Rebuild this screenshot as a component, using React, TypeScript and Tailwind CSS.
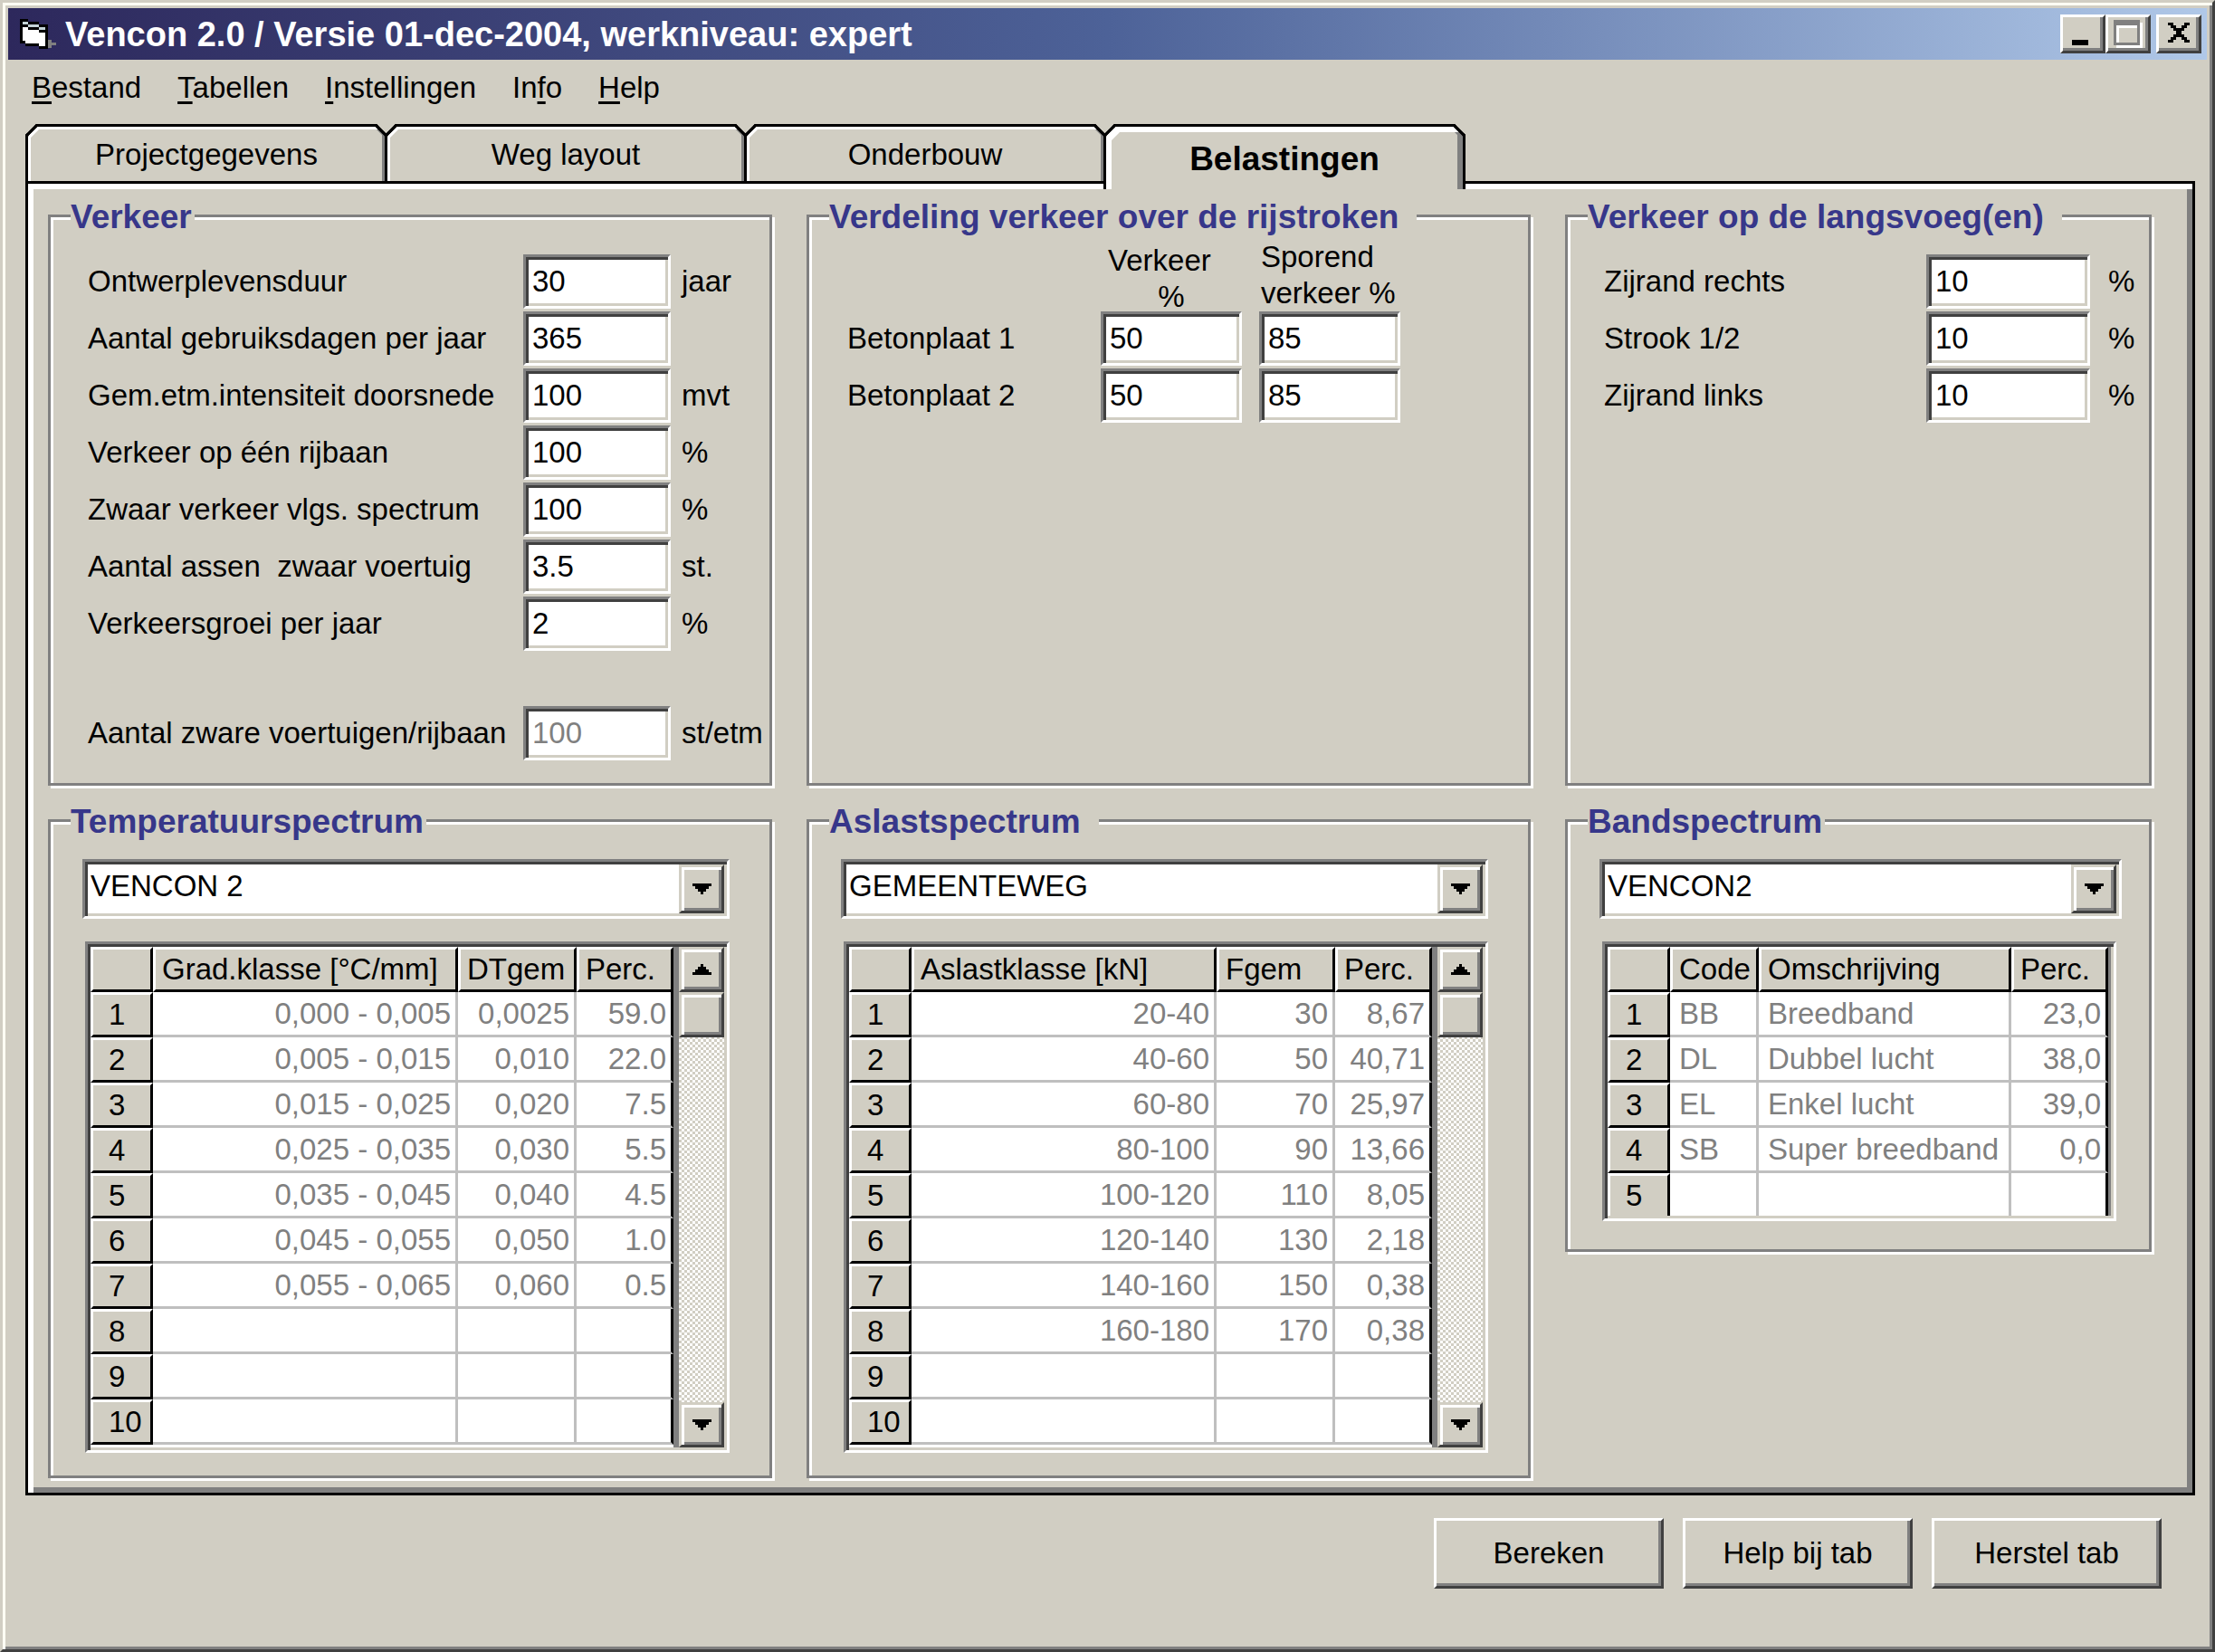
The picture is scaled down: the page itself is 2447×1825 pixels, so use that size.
import { useState } from 'react';
import type { ReactNode } from 'react';
import clsx from 'clsx';

const RAISED =
  'bg-[#d1cec3] border-3 border-t-white border-l-white border-r-[#404040] border-b-[#404040] shadow-[inset_-3px_-3px_0_#808080]';
const SUNKEN =
  'bg-white border-3 border-t-[#808080] border-l-[#808080] border-r-white border-b-white shadow-[inset_3px_3px_0_#404040,inset_-3px_-3px_0_#d1cec3]';
const SCROLL_BUTTON =
  'flex items-center justify-center h-[50px] shrink-0 bg-[#d1cec3] border-3 border-t-[#d1cec3] border-l-[#d1cec3] border-r-[#404040] border-b-[#404040] shadow-[inset_3px_3px_0_#fff,inset_-3px_-3px_0_#808080]';
const HEAD_CELL =
  'bg-[#d1cec3] border-3 border-t-white border-l-white border-r-black border-b-black font-normal text-left';

const MENU = [
  ['', 'B', 'estand'],
  ['', 'T', 'abellen'],
  ['', 'I', 'nstellingen'],
  ['In', 'f', 'o'],
  ['', 'H', 'elp']
];

const TABS = ['Projectgegevens', 'Weg layout', 'Onderbouw', 'Belastingen'];

const TRAFFIC = [
  { id: 'levensduur', label: 'Ontwerplevensduur', value: '30', unit: 'jaar' },
  { id: 'dagen', label: 'Aantal gebruiksdagen per jaar', value: '365', unit: '' },
  { id: 'intensiteit', label: 'Gem.etm.intensiteit doorsnede', value: '100', unit: 'mvt' },
  { id: 'rijbaan', label: 'Verkeer op één rijbaan', value: '100', unit: '%' },
  { id: 'zwaar', label: 'Zwaar verkeer vlgs. spectrum', value: '100', unit: '%' },
  { id: 'assen', label: 'Aantal assen  zwaar voertuig', value: '3.5', unit: 'st.' },
  { id: 'groei', label: 'Verkeersgroei per jaar', value: '2', unit: '%' }
];

const SLABS = [
  { label: 'Betonplaat 1', traffic: '50', tracking: '85' },
  { label: 'Betonplaat 2', traffic: '50', tracking: '85' }
];

const JOINTS = [
  { id: 'rechts', label: 'Zijrand rechts', value: '10' },
  { id: 'strook', label: 'Strook 1/2', value: '10' },
  { id: 'links', label: 'Zijrand links', value: '10' }
];

type Column = { title: string; width?: string; align: 'left' | 'right' };

const TEMPERATURE_COLUMNS: Column[] = [
  { title: 'Grad.klasse [°C/mm]', align: 'right' },
  { title: 'DTgem', width: 'w-[131px]', align: 'right' },
  { title: 'Perc.', width: 'w-[107px]', align: 'right' }
];
const TEMPERATURE_ROWS = [
  ['0,000 - 0,005', '0,0025', '59.0'],
  ['0,005 - 0,015', '0,010', '22.0'],
  ['0,015 - 0,025', '0,020', '7.5'],
  ['0,025 - 0,035', '0,030', '5.5'],
  ['0,035 - 0,045', '0,040', '4.5'],
  ['0,045 - 0,055', '0,050', '1.0'],
  ['0,055 - 0,065', '0,060', '0.5'],
  ['', '', ''],
  ['', '', ''],
  ['', '', '']
];

const AXLE_COLUMNS: Column[] = [
  { title: 'Aslastklasse [kN]', align: 'right' },
  { title: 'Fgem', width: 'w-[131px]', align: 'right' },
  { title: 'Perc.', width: 'w-[107px]', align: 'right' }
];
const AXLE_ROWS = [
  ['20-40', '30', '8,67'],
  ['40-60', '50', '40,71'],
  ['60-80', '70', '25,97'],
  ['80-100', '90', '13,66'],
  ['100-120', '110', '8,05'],
  ['120-140', '130', '2,18'],
  ['140-160', '150', '0,38'],
  ['160-180', '170', '0,38'],
  ['', '', ''],
  ['', '', '']
];

const TYRE_COLUMNS: Column[] = [
  { title: 'Code', width: 'w-[98px]', align: 'left' },
  { title: 'Omschrijving', align: 'left' },
  { title: 'Perc.', width: 'w-[107px]', align: 'right' }
];
const TYRE_ROWS = [
  ['BB', 'Breedband', '23,0'],
  ['DL', 'Dubbel lucht', '38,0'],
  ['EL', 'Enkel lucht', '39,0'],
  ['SB', 'Super breedband', '0,0'],
  ['', '', '']
];

function AppIcon() {
  return (
    <svg viewBox="0 0 40 34" className="w-10 h-[34px]" shapeRendering="crispEdges" aria-hidden="true">
      <path d="M0 0h9v3h12v3h10v27H21v-3H6v-3H0z" fill="#000" />
      <path d="M3 9h6v3h12v3h7v15h-7v-3H6v-3H3z" fill="#fff" />
      <path d="M3 3h6v3H3zM9 6h12v3H9zM21 9h7v3h-7z" fill="#c3d3d6" />
      <path d="M31 23h4v3h5v3h-5v3h-4z" fill="#808080" />
    </svg>
  );
}

function Arrow({ up = false }: { up?: boolean }) {
  return (
    <svg viewBox="0 0 7 4" className="w-[21px] h-3" shapeRendering="crispEdges" aria-hidden="true">
      <path d={up ? 'M3 0h1v1h1v1h1v1h1v1H0V3h1V2h1V1h1z' : 'M0 0h7v1H6v1H5v1H4v1H3V3H2V2H1V1H0z'} />
    </svg>
  );
}

function TitleBar() {
  return (
    <header className="flex items-center h-[57px] pl-[13px] pr-[6px] bg-linear-to-r from-[#2d285c] via-[#4d6298] to-[#b0c8e8]">
      <AppIcon />
      <h1 className="flex-1 pl-[10px] text-[38px] leading-10 font-bold text-white whitespace-nowrap">
        Vencon 2.0 / Versie 01-dec-2004, werkniveau: expert
      </h1>
      <button type="button" aria-label="Minimaliseren" className={clsx(RAISED, 'w-[50px] h-[43px]')}>
        <svg viewBox="0 0 44 37" shapeRendering="crispEdges" aria-hidden="true">
          <path d="M10 25h18v6H10z" />
        </svg>
      </button>
      <button type="button" aria-label="Maximaliseren" disabled className={clsx(RAISED, 'w-[50px] h-[43px]')}>
        <svg viewBox="0 0 44 37" shapeRendering="crispEdges" aria-hidden="true">
          <path d="M9 6h29v28H9z" fill="#fff" />
          <path d="M6 3h29v28H6z" fill="#808080" />
          <path d="M9 9h23v19H9z" fill="#fff" />
          <path d="M12 12h20v16H12z" fill="#d1cec3" />
        </svg>
      </button>
      <button type="button" aria-label="Sluiten" className={clsx(RAISED, 'w-[50px] h-[43px] ml-[6px]')}>
        <svg viewBox="0 0 44 37" shapeRendering="crispEdges" aria-hidden="true">
          <path d="M10 6h6v3h3v3h6V9h3V6h6v3h-3v3h-3v3h-3v4h3v3h3v3h3v3h-6v-3h-3v-3h-6v3h-3v3h-6v-3h3v-3h3v-3h3v-4h-3v-3h-3V9h-3z" />
        </svg>
      </button>
    </header>
  );
}

function Group({ title, wide, className, children }: {
  title: string;
  wide?: boolean;
  className?: string;
  children: ReactNode;
}) {
  return (
    <section
      aria-label={title}
      className={clsx('border-3 border-[#808080] shadow-[inset_3px_3px_0_#fff,3px_3px_0_#fff]', className)}
    >
      <h2
        className={clsx(
          'w-fit -mt-5 mb-[21px] ml-[22px] bg-[#d1cec3] text-[37px] leading-10 font-bold text-[#37378a] whitespace-nowrap',
          wide ? 'pr-5' : 'pr-[3px]'
        )}
      >
        {title}
      </h2>
      {children}
    </section>
  );
}

function Field({ id, label, value, disabled, className }: {
  id: string;
  label?: string;
  value: string;
  disabled?: boolean;
  className: string;
}) {
  const [text, setText] = useState(value);
  return (
    <input
      id={id}
      type="text"
      aria-label={label}
      value={text}
      disabled={disabled}
      onChange={(e) => setText(e.target.value)}
      className={clsx(SUNKEN, 'h-[60px] px-[7px] outline-none disabled:text-[#808080]', className)}
    />
  );
}

function TrafficRow({ id, label, value, unit, disabled }: {
  id: string;
  label: string;
  value: string;
  unit: string;
  disabled?: boolean;
}) {
  return (
    <div className="flex items-center">
      <label htmlFor={id} className="flex-1 whitespace-pre">{label}</label>
      <Field id={id} value={value} disabled={disabled} className="w-[163px]" />
      <span className="w-[109px] pl-3">{unit}</span>
    </div>
  );
}

function Combo({ label, options }: { label: string; options: string[] }) {
  return (
    <div className="relative">
      <select aria-label={label} className={clsx(SUNKEN, 'block w-full h-[66px] pl-[6px] pr-14 pb-[6px] appearance-none outline-none')}>
        {options.map((o) => <option key={o}>{o}</option>)}
      </select>
      <span className={clsx(SCROLL_BUTTON, 'absolute right-[6px] top-[6px] w-[50px] h-[54px] pointer-events-none')}>
        <Arrow />
      </span>
    </div>
  );
}

function Grid({ label, columns, rows, scroll }: {
  label: string;
  columns: Column[];
  rows: string[][];
  scroll?: boolean;
}) {
  // without a scroll bar the last row runs into the frame and has no line below it
  const cut = (i: number) => !scroll && i === rows.length - 1;

  return (
    <div className={clsx(SUNKEN, 'flex p-[3px]')}>
      <div className={clsx('flex-1 bg-white border-[#808080]', scroll ? 'border-r-[6px] pb-[3px]' : 'border-r-3')}>
        <table aria-label={label} className="w-full table-fixed border-separate border-spacing-0">
          <thead>
            <tr className="h-[50px]">
              <th className={clsx(HEAD_CELL, 'w-[69px]')} />
              {columns.map((c) => (
                <th key={c.title} scope="col" className={clsx(HEAD_CELL, 'pl-[7px] whitespace-nowrap', c.width)}>
                  {c.title}
                </th>
              ))}
            </tr>
          </thead>
          <tbody className="text-[#808080]">
            {rows.map((row, i) => (
              <tr key={i} className={cut(i) ? 'h-[47px]' : 'h-[50px]'}>
                <th scope="row" className={clsx(HEAD_CELL, 'pl-[17px] text-black', cut(i) && 'border-b-0')}>{i + 1}</th>
                {row.map((cell, j) => (
                  <td
                    key={j}
                    className={clsx(
                      'border-r-3 border-[#bfbfbf] whitespace-nowrap',
                      cut(i) ? 'border-b-0' : 'border-b-3',
                      columns[j].align === 'right' ? 'text-right pr-[5px]' : 'pl-[10px]',
                      j === row.length - 1 && 'border-r-black'
                    )}
                  >
                    {cell}
                  </td>
                ))}
              </tr>
            ))}
          </tbody>
        </table>
      </div>
      {scroll && (
        <div className="flex flex-col w-[50px] bg-[repeating-conic-gradient(#d1cec3_0_25%,#fff_0_50%)] bg-size-[6px_6px]">
          <button type="button" aria-label="Omhoog" className={SCROLL_BUTTON}><Arrow up /></button>
          <div className={SCROLL_BUTTON} />
          <button type="button" aria-label="Omlaag" className={clsx(SCROLL_BUTTON, 'mt-auto')}><Arrow /></button>
        </div>
      )}
    </div>
  );
}

export default function App() {
  const [tab, setTab] = useState('Belastingen');

  return (
    <div className="flex flex-col min-h-screen p-[6px] bg-[#d1cec3] border-3 border-t-[#d1cec3] border-l-[#d1cec3] border-r-[#404040] border-b-[#404040] shadow-[inset_3px_3px_0_#fffff4,inset_-3px_-3px_0_#808080] font-['Liberation_Sans',Arial,sans-serif] text-[33px] leading-10 text-black">
      <TitleBar />

      <nav className="flex gap-10 pt-[11px] pb-5 pl-[26px]">
        {MENU.map(([before, key, after]) => (
          <button key={key} type="button">
            {before}<span className="underline decoration-3 underline-offset-4">{key}</span>{after}
          </button>
        ))}
      </nav>

      <main className="ml-[19px] mr-[13px]">
        <div role="tablist" className="flex">
          {TABS.map((t, i) => (
            <button
              key={t}
              type="button"
              role="tab"
              aria-selected={t === tab}
              onClick={() => setTab(t)}
              className={clsx(
                'w-[400px] pt-[2px] border-3 border-b-0 border-black rounded-t-xl [corner-shape:bevel] bg-[#d1cec3]',
                i > 0 && '-ml-[3px]',
                t === tab
                  ? 'relative z-10 h-[72px] -mb-[9px] font-bold text-[37px] shadow-[inset_6px_6px_0_#fff,inset_-6px_0_0_#808080]'
                  : 'h-[63px] shadow-[inset_3px_3px_0_#fff,inset_-3px_0_0_#808080]'
              )}
            >
              {t}
            </button>
          ))}
        </div>

        <div
          role="tabpanel"
          className="grid grid-cols-[800fr_800fr_648fr] gap-x-[38px] gap-y-[37px] items-start pt-[34px] pb-4 pl-[22px] pr-[45px] border-3 border-black shadow-[inset_6px_6px_0_#fff,inset_-6px_-6px_0_#808080]"
        >
          <Group title="Verkeer" className="self-stretch">
            <div className="flex flex-col gap-[3px] pl-[41px] pb-[25px]">
              {TRAFFIC.map((f) => <TrafficRow key={f.id} {...f} />)}
              <div className="h-[55px]" />
              <TrafficRow id="zware" label="Aantal zware voertuigen/rijbaan" value="100" unit="st/etm" disabled />
            </div>
          </Group>

          <Group title="Verdeling verkeer over de rijstroken" wide className="self-stretch">
            <div className="-mt-[21px] pl-[42px] pr-[141px]">
              <div className="flex gap-[19px] h-[84px]">
                <span className="flex-1" />
                <div className="w-[156px] pt-2">
                  <p className="pl-2">Verkeer</p>
                  <p className="text-center">%</p>
                </div>
                <p className="w-[156px] pt-1 pl-[2px] whitespace-nowrap">Sporend<br />verkeer %</p>
              </div>
              <div className="flex flex-col gap-[3px]">
                {SLABS.map((s) => (
                  <div key={s.label} className="flex items-center gap-[19px]">
                    <span className="flex-1">{s.label}</span>
                    <Field id={`${s.label}-v`} label={`${s.label} verkeer`} value={s.traffic} className="w-[156px]" />
                    <Field id={`${s.label}-s`} label={`${s.label} sporend`} value={s.tracking} className="w-[156px]" />
                  </div>
                ))}
              </div>
            </div>
          </Group>

          <Group title="Verkeer op de langsvoeg(en)" wide className="self-stretch">
            <div className="flex flex-col gap-[3px] pl-10">
              {JOINTS.map((f) => (
                <div key={f.id} className="flex items-center">
                  <label htmlFor={f.id} className="flex-1">{f.label}</label>
                  <Field id={f.id} value={f.value} className="w-[181px]" />
                  <span className="w-[65px] pl-5">%</span>
                </div>
              ))}
            </div>
          </Group>

          <Group title="Temperatuurspectrum">
            <div className="flex flex-col gap-[25px] pl-[35px] pr-[44px] pb-[25px]">
              <Combo label="Temperatuurspectrum" options={['VENCON 2']} />
              <div className="pl-[3px]">
                <Grid label="Temperatuurspectrum" columns={TEMPERATURE_COLUMNS} rows={TEMPERATURE_ROWS} scroll />
              </div>
            </div>
          </Group>

          <Group title="Aslastspectrum" wide>
            <div className="flex flex-col gap-[25px] pl-[35px] pr-[44px] pb-[25px]">
              <Combo label="Aslastspectrum" options={['GEMEENTEWEG']} />
              <div className="pl-[3px]">
                <Grid label="Aslastspectrum" columns={AXLE_COLUMNS} rows={AXLE_ROWS} scroll />
              </div>
            </div>
          </Group>

          <Group title="Bandspectrum">
            <div className="flex flex-col gap-[25px] pl-[35px] pr-[30px] pb-[31px]">
              <Combo label="Bandspectrum" options={['VENCON2']} />
              <div className="pl-[3px] pr-[6px]">
                <Grid label="Bandspectrum" columns={TYRE_COLUMNS} rows={TYRE_ROWS} />
              </div>
            </div>
          </Group>
        </div>
      </main>

      <footer className="flex justify-end gap-[21px] pt-[25px] pr-[50px]">
        {['Bereken', 'Help bij tab', 'Herstel tab'].map((label) => (
          <button key={label} type="button" className={clsx(RAISED, 'w-[254px] h-[78px]')}>{label}</button>
        ))}
      </footer>
    </div>
  );
}
